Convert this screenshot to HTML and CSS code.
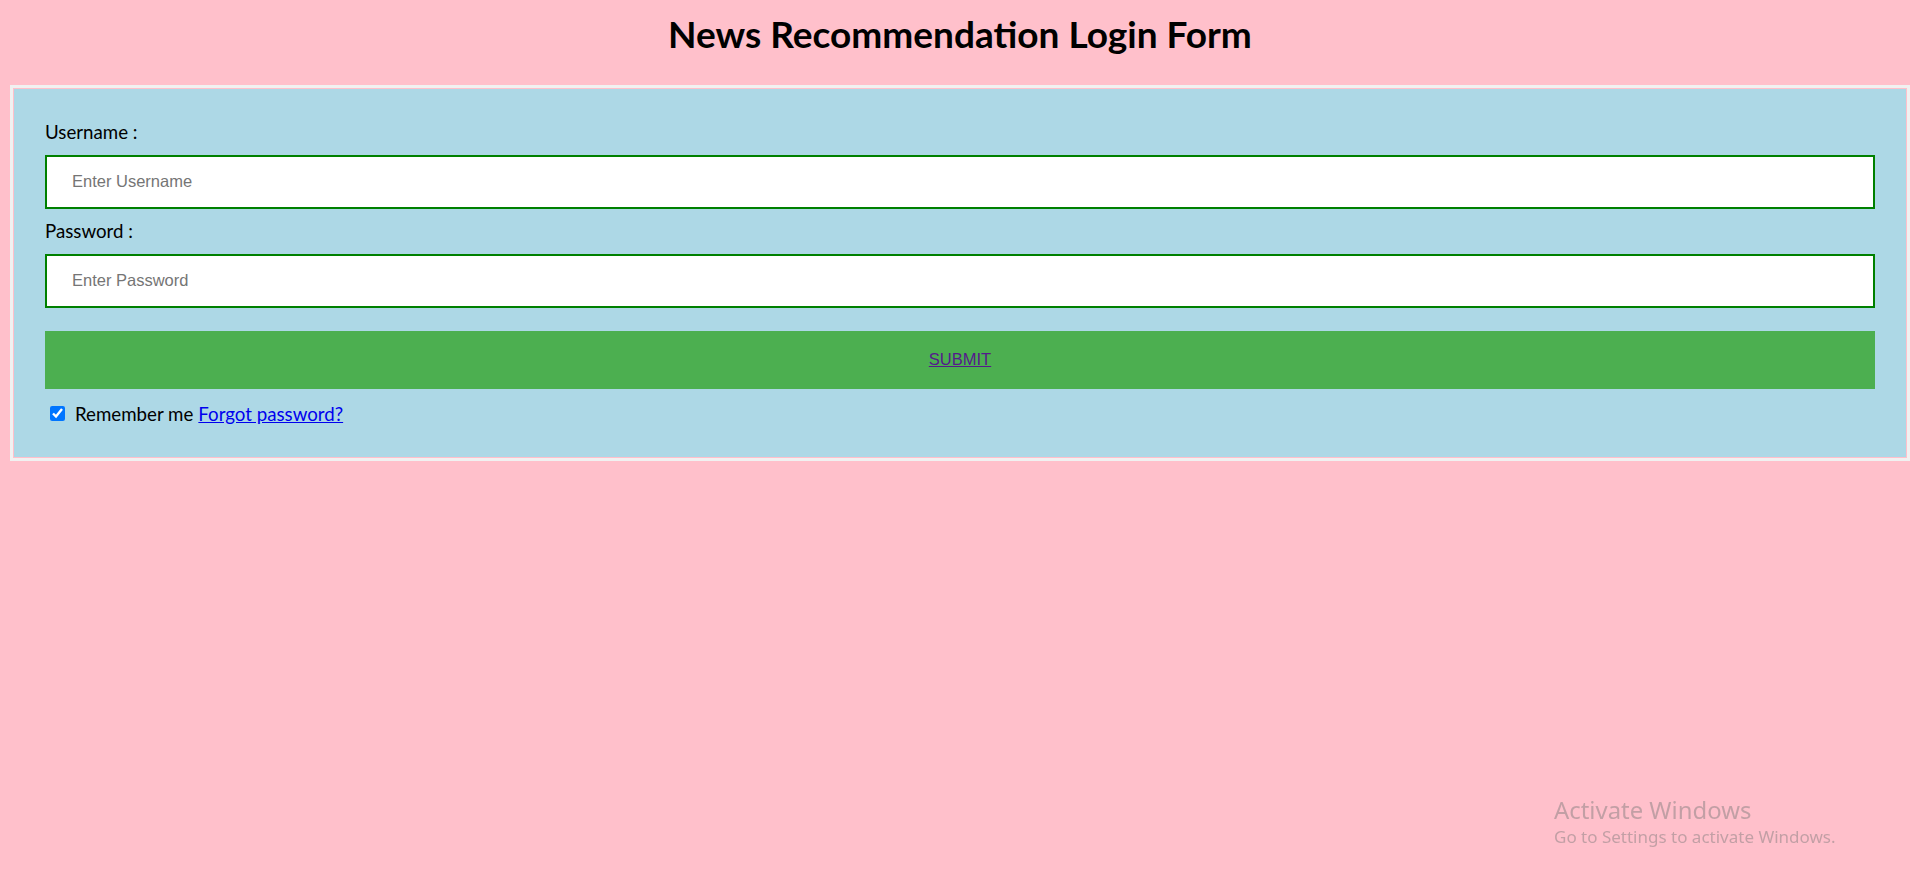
FILE: index.html
```html
<!DOCTYPE html>
<html lang="en">
<head>
<meta charset="utf-8">
<title>News Recommendation Login Form</title>
<link rel="stylesheet" href="styles.css">
</head>
<body>
<h1 class="title">News Recommendation Login Form</h1>
<form class="login-form">
  <div class="container">
    <label class="field-label">Username :</label>
    <input class="field-input" type="text" placeholder="Enter Username" name="username">
    <label class="field-label">Password :</label>
    <input class="field-input" type="password" placeholder="Enter Password" name="password">
    <button class="submit-btn" type="button"><a class="submit-link" href="#">SUBMIT</a></button>
    <div class="remember-row">
      <input class="remember-check" type="checkbox" checked>
      <span class="remember-text">Remember me</span>
      <a class="forgot-link" href="#">Forgot password?</a>
    </div>
  </div>
</form>
<div class="activate">
  <div class="activate-title">Activate Windows</div>
  <div class="activate-sub">Go to Settings to activate Windows.</div>
</div>
</body>
</html>
```

FILE: styles.css
```css
html, body {
  height: 100%;
}
body {
  margin: 0;
  padding: 0 10px;
  background: #ffc0cb;
  font-family: Lato, "Open Sans", sans-serif;
  font-size: 18.7px;
  color: #000;
  overflow: hidden;
}
.title {
  margin: 0;
  padding-top: 13px;
  height: 85px;
  box-sizing: border-box;
  text-align: center;
  font-family: Lato, sans-serif;
  font-weight: 700;
  font-size: 37px;
  line-height: 42px;
}
.login-form {
  border: 3px solid #f1f1f1;
  padding: 1px;
  margin: 0;
}
.container {
  background: #add8e6;
  padding: 31px 31px;
}
.field-label {
  display: block;
  height: 24.5px;
  line-height: 25px;
  font-size: 18.7px;
}
.field-input {
  display: block;
  width: 100%;
  box-sizing: border-box;
  height: 54.5px;
  margin: 10px 0;
  padding: 0 25px;
  border: 2.5px solid green;
  background: #fff;
  font-family: "Liberation Sans", Arial, sans-serif;
  font-size: 16.5px;
  outline: none;
}
.field-input::placeholder {
  color: #757575;
}
.submit-btn {
  display: block;
  width: 100%;
  height: 58px;
  margin: 22.5px 0 10px;
  border: none;
  background: #4caf50;
  font-family: "Liberation Sans", Arial, sans-serif;
  font-size: 16.5px;
  padding: 0;
  cursor: pointer;
}
.submit-link {
  color: #551a8b;
  text-decoration: underline;
}
.remember-row {
  display: flex;
  align-items: center;
  height: 27px;
  padding-top: 3px;
  box-sizing: border-box;
  font-size: 18.7px;
}
.remember-check {
  width: 15px;
  height: 15px;
  margin: 0 10px 0 5px;
}
.remember-text {
  margin-right: 5px;
}
.forgot-link {
  color: #0000ee;
  text-decoration: underline;
}
.activate {
  position: fixed;
  left: 1554px;
  top: 794px;
  color: rgba(120, 120, 120, 0.45);
  font-family: "Noto Sans", "Open Sans", sans-serif;
}
.activate-title {
  font-size: 23.9px;
  line-height: 32px;
}
.activate-sub {
  font-size: 17px;
  line-height: 22px;
}
```
